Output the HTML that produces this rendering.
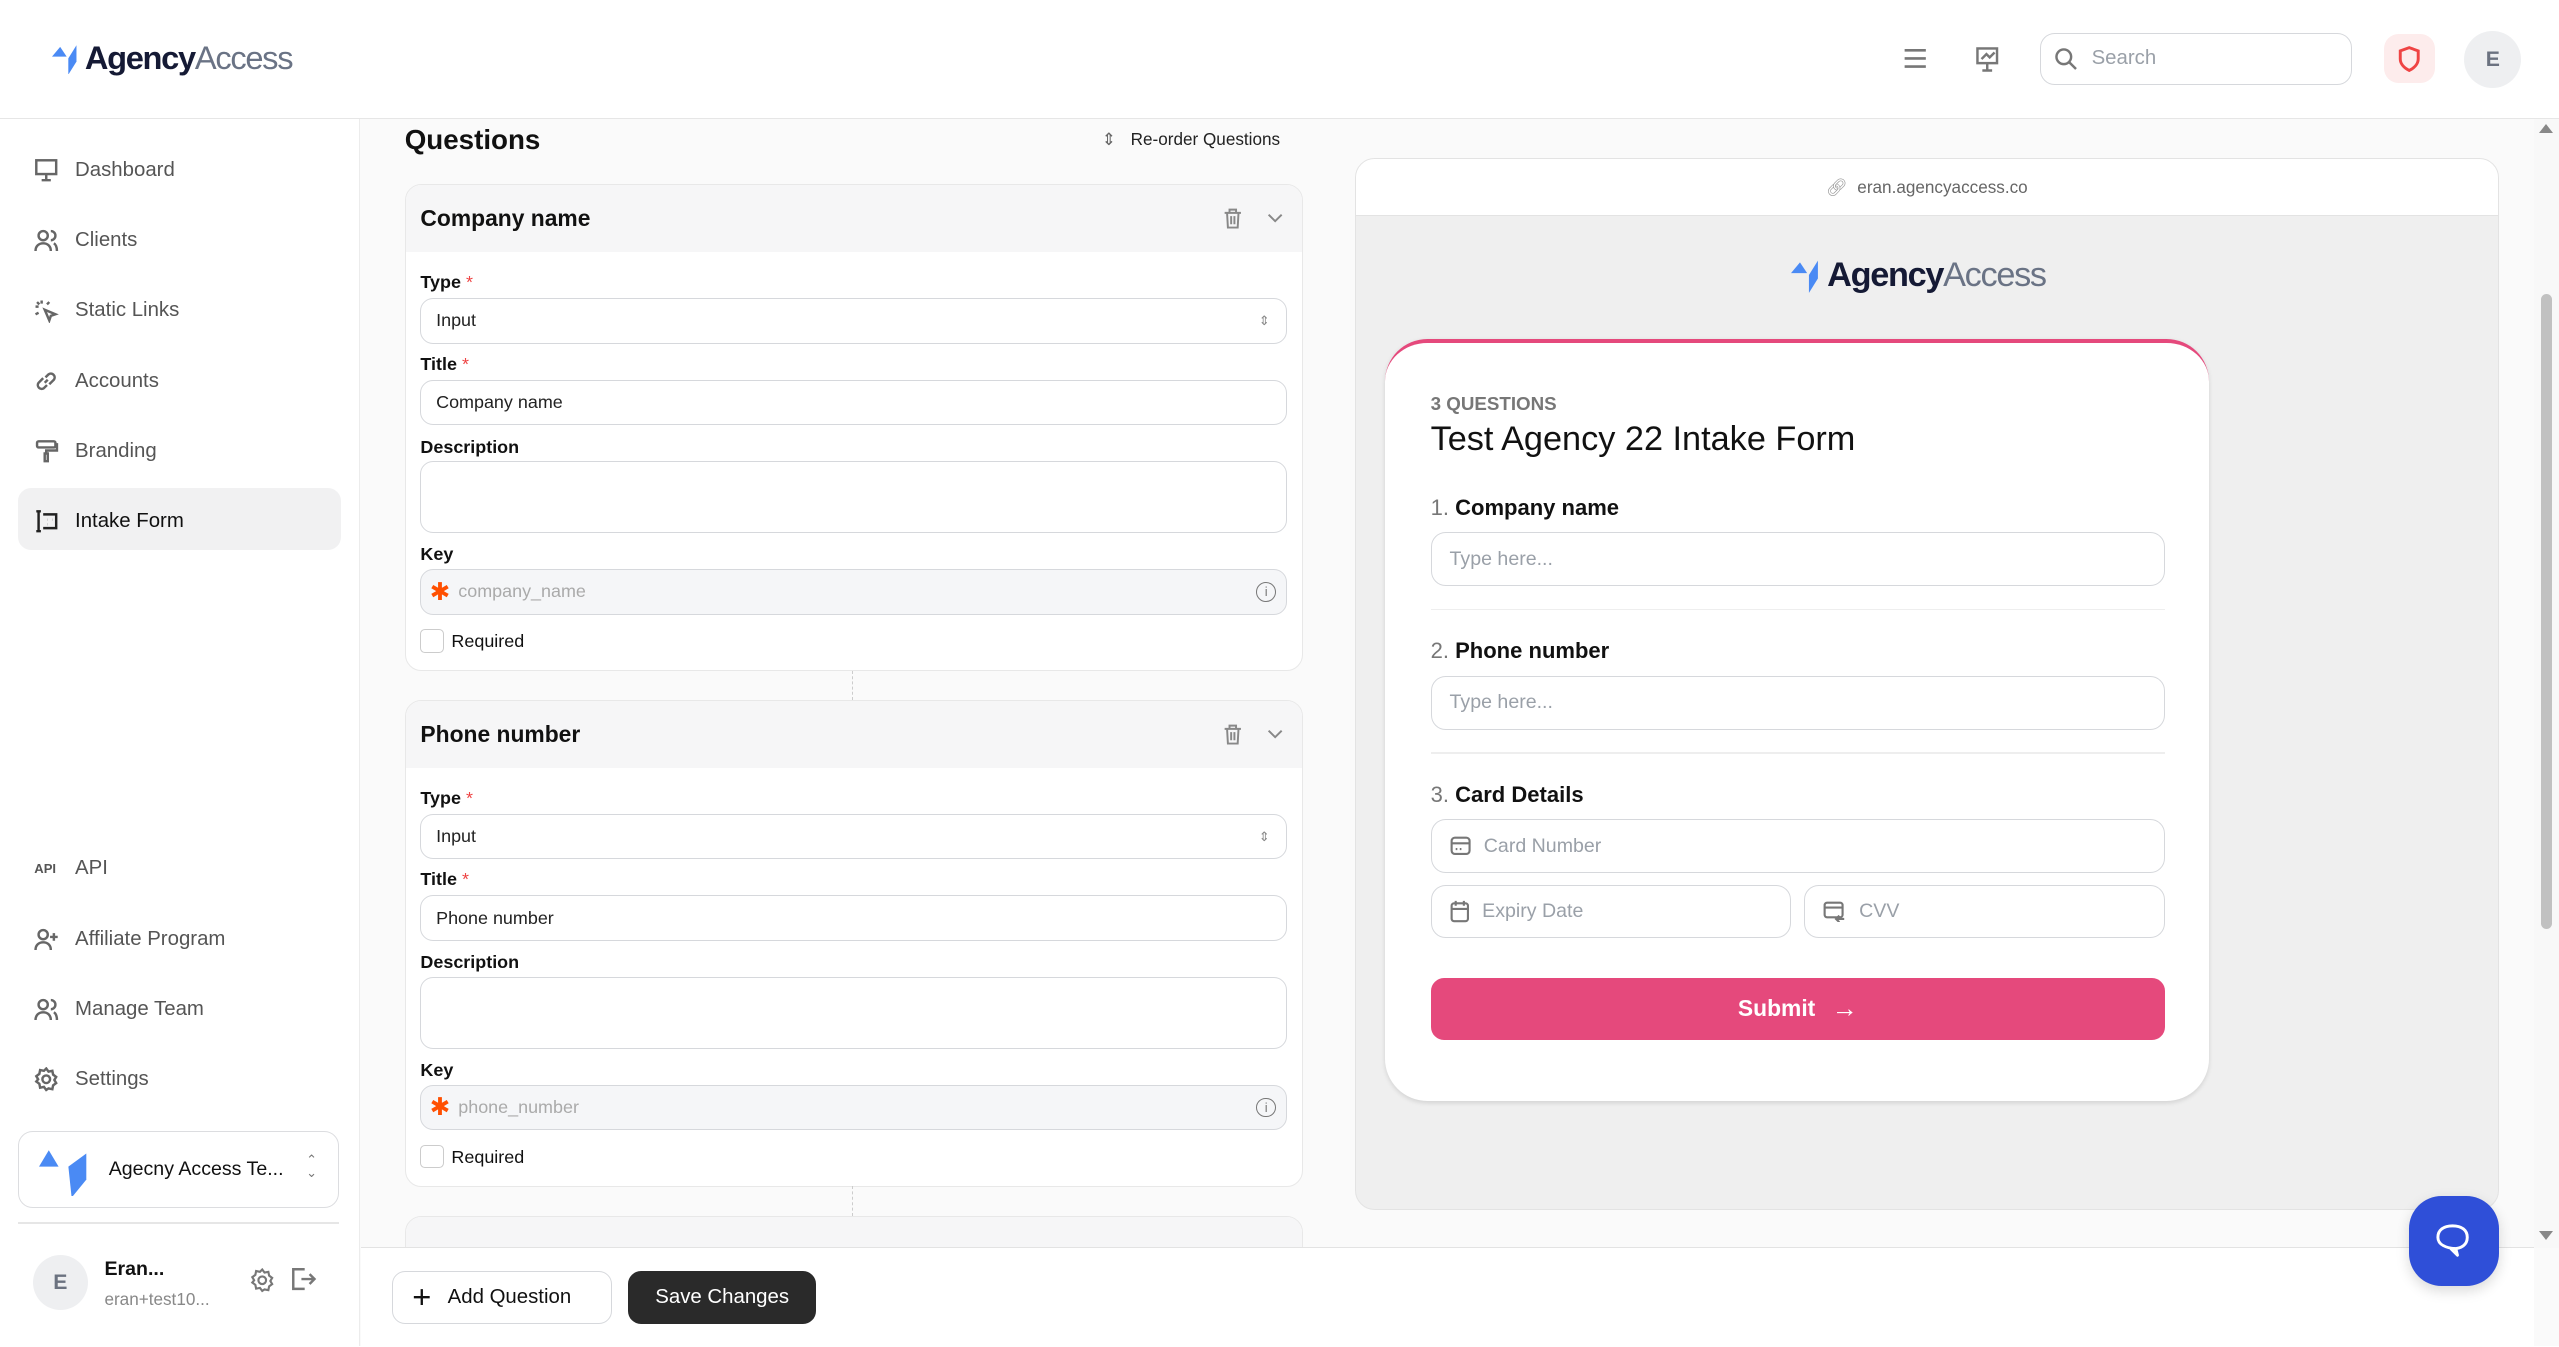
<!DOCTYPE html>
<html><head><meta charset="utf-8"><style>
html,body{margin:0;padding:0;overflow:hidden;background:#fff}
#r{zoom:1.632;width:1568px;height:825px;position:relative;font-family:"Liberation Sans","DejaVu Sans",sans-serif;color:#111;overflow:hidden;background:#fafafa}
.a{position:absolute}
.hdr{left:0;top:0;width:1568px;height:72px;background:#fff;border-bottom:1px solid #e6e6e6}
.side{left:0;top:73px;width:220px;height:752px;background:#fff;border-right:1px solid #ececec}
.nav{position:absolute;left:21px;font-size:12.5px;color:#555;display:flex;align-items:center;gap:10px}
.nav svg{width:15px;height:15px;fill:none;stroke:#666;stroke-width:1.6}
.card{position:absolute;left:248px;width:549px;background:#fff;border:1px solid #e8e8e8;border-radius:10px;overflow:hidden}
.ch{height:41px;background:#f6f6f7;display:flex;align-items:center;padding-left:9px;font-size:14px;font-weight:bold;color:#111}
.lbl{position:absolute;left:9px;font-size:11px;font-weight:bold;color:#111}
.lbl i{color:#e44;font-style:normal;font-weight:normal}
.inp{position:absolute;left:9px;width:531px;border:1px solid #d6d8dc;border-radius:8px;font-size:11px;color:#222;box-sizing:border-box;padding-left:9px;display:flex;align-items:center;background:#fff}
.pv{left:830px;top:97px;width:700px;height:643px;border:1px solid #e3e3e3;border-radius:12px;background:#efefef;overflow:hidden}
.fi{position:absolute;border:1px solid #d6d8dc;border-radius:9px;height:33px;box-sizing:border-box;background:#fff;display:flex;align-items:center;padding-left:11px;font-size:12px;color:#9aa0a8;gap:8px}
.q{position:absolute;left:28px;font-size:13.5px;font-weight:bold;color:#111}
.q span{color:#777;font-weight:normal}
</style></head><body><div id="r">
<div class="a hdr">
 <div class="a" style="left:32px;top:24px;display:flex;align-items:center">
  <svg width="20" height="20" viewBox="0 0 20 20"><path d="M0 9 L5 3 L9 9Z" fill="#4a8af4"/><path d="M10 10 L15 2 L15 12 L10 20Z" fill="#4a8af4"/></svg>
  <span style="font-size:20px;letter-spacing:-0.8px;color:#151a35;font-weight:bold">Agency</span><span style="font-size:20px;letter-spacing:-0.8px;color:#6a7385">Access</span>
 </div>
 <svg class="a" style="left:1166px;top:29px" width="15" height="14" viewBox="0 0 15 14" stroke="#777" stroke-width="1.6"><path d="M1 2h13M1 7h13M1 12h13"/></svg>
 <svg class="a" style="left:1210px;top:28px" width="15" height="16" viewBox="0 0 15 16" fill="none" stroke="#777" stroke-width="1.5"><rect x="1.5" y="1.5" width="12" height="9"/><path d="M7.5 10.5v4M4.5 15h6M4 8l3-3 2 2 3-3"/></svg>
 <div class="a" style="left:1250px;top:20px;width:191px;height:32px;border:1px solid #d6d8dc;border-radius:9px;box-sizing:border-box;display:flex;align-items:center;padding-left:8px;gap:8px;color:#9aa0a8;font-size:12.5px">
  <svg width="15" height="15" viewBox="0 0 15 15" fill="none" stroke="#777" stroke-width="1.5"><circle cx="6" cy="6" r="4.5"/><path d="M9.5 9.5l4 4"/></svg>Search</div>
 <div class="a" style="left:1461px;top:21px;width:31px;height:30px;background:#fdecec;border-radius:9px"><svg class="a" style="left:8px;top:7px" width="15" height="16" viewBox="0 0 15 16" fill="none" stroke="#ef4444" stroke-width="1.8"><path d="M2 3l5.5-2 5.5 2v5c0 3-2.5 5.5-5.5 7C4.5 13.5 2 11 2 8Z"/></svg></div>
 <div class="a" style="left:1510px;top:19px;width:35px;height:35px;border-radius:50%;background:#eeeff1;color:#6b7280;font-weight:bold;font-size:13px;display:flex;align-items:center;justify-content:center">E</div>
</div>
<div class="a side">
 <div class="a" style="left:11px;top:226px;width:198px;height:38px;background:#f1f1f2;border-radius:8px"></div>
 <div class="nav" style="top:24px"><svg viewBox="0 0 16 16"><rect x="1.5" y="1.5" width="13" height="9"/><path d="M8 10.5v4M5 14.5h6"/></svg>Dashboard</div>
 <div class="nav" style="top:67px"><svg viewBox="0 0 16 16"><circle cx="6" cy="5" r="3"/><path d="M1 15c0-3 2-5 5-5s5 2 5 5M11 2a3 3 0 010 6M13 10c1.5 1 2 3 2 5"/></svg>Clients</div>
 <div class="nav" style="top:110px"><svg viewBox="0 0 16 16"><path d="M7 7l7 3-3 1-1 3ZM5 1v2M1 5h2M2 2l1.5 1.5M1 10l2-1M10 2l-1.5 1.5"/></svg>Static Links</div>
 <div class="nav" style="top:153px"><svg viewBox="0 0 16 16"><path d="M7 9l2-2M6 6l-3 3a2.5 2.5 0 003.5 3.5l2-2M10 10l3-3a2.5 2.5 0 00-3.5-3.5l-2 2"/></svg>Accounts</div>
 <div class="nav" style="top:196px"><svg viewBox="0 0 16 16"><rect x="2" y="1.5" width="12" height="4" rx="1"/><path d="M14 3.5h1v4H8v2M7 9.5h2v5H7z"/></svg>Branding</div>
 <div class="nav" style="top:239px;color:#111"><svg viewBox="0 0 16 16" style="stroke:#222"><path d="M3 1.5v13M1.5 1.5h3M1.5 14.5h3M6 3.5h8.5v9H6"/><path d="M9 7h.1M12 7h.1M9 10h.1"/></svg>Intake Form</div>
 <div class="nav" style="top:452px"><span style="font-size:8px;font-weight:bold;color:#555;width:15px">API</span>API</div>
 <div class="nav" style="top:495px"><svg viewBox="0 0 16 16"><circle cx="6" cy="5" r="3"/><path d="M1 15c0-3 2-5 5-5s5 2 5 5M13 4v5M10.5 6.5h5"/></svg>Affiliate Program</div>
 <div class="nav" style="top:538px"><svg viewBox="0 0 16 16"><circle cx="6" cy="5" r="3"/><path d="M1 15c0-3 2-5 5-5s5 2 5 5M11 2a3 3 0 010 6M13 10c1.5 1 2 3 2 5"/></svg>Manage Team</div>
 <div class="nav" style="top:581px"><svg viewBox="0 0 16 16"><circle cx="8" cy="8" r="2.5"/><path d="M8 1l1.5 2 2.5-.5.5 2.5 2 1.5-1.2 2 1.2 2-2 1.5-.5 2.5-2.5-.5L8 15l-1.5-2-2.5.5-.5-2.5-2-1.5L2.7 8 1.5 6l2-1.5.5-2.5 2.5.5Z"/></svg>Settings</div>
 <div class="a" style="left:11px;top:620px;width:197px;height:47px;border:1px solid #dcdde0;border-radius:9px;box-sizing:border-box">
  <svg class="a" style="left:12px;top:9px" width="30" height="30" viewBox="0 0 30 30"><path d="M0 12L6 2 12 12Z" fill="#4a8af4"/><path d="M18 12L29 4 29 20 20 31Z" fill="#4a8af4"/></svg>
  <div class="a" style="left:55px;top:16px;font-size:12px;color:#111">Agecny Access Te...</div>
  <div class="a" style="left:176px;top:13px;font-size:8px;color:#777;line-height:8px">&#8963;<br>&#8964;</div>
 </div>
 <div class="a" style="left:11px;top:676px;width:197px;height:1px;background:#e6e6e6"></div>
 <div class="a" style="left:20px;top:696px;width:34px;height:34px;border-radius:50%;background:#eeeff1;color:#6b7280;font-weight:bold;font-size:13px;display:flex;align-items:center;justify-content:center">E</div>
 <div class="a" style="left:64px;top:698px;font-size:12px;font-weight:bold">Eran...</div>
 <div class="a" style="left:64px;top:717px;font-size:10.5px;color:#888">eran+test10...</div>
 <svg class="a" style="left:153px;top:704px" width="15" height="15" viewBox="0 0 16 16" fill="none" stroke="#777" stroke-width="1.4"><circle cx="8" cy="8" r="2.5"/><path d="M8 1l1.5 2 2.5-.5.5 2.5 2 1.5-1.2 2 1.2 2-2 1.5-.5 2.5-2.5-.5L8 15l-1.5-2-2.5.5-.5-2.5-2-1.5L2.7 8 1.5 6l2-1.5.5-2.5 2.5.5Z"/></svg>
 <svg class="a" style="left:178px;top:703px" width="16" height="16" viewBox="0 0 16 16" fill="none" stroke="#777" stroke-width="1.5"><path d="M9 2H2v12h7M7 8h8M12 5l3 3-3 3"/></svg>
</div>

<div class="a" style="left:248px;top:76px;font-size:17px;font-weight:bold">Questions</div>
<div class="a" style="left:675px;top:79px;font-size:10.5px;color:#222;display:flex;gap:9px;align-items:center"><span style="color:#666">&#8661;</span>Re-order Questions</div>

<div class="card" style="top:113px;height:297px">
 <div class="ch">Company name</div>
 <svg class="a" style="left:501px;top:14px" width="12" height="13" viewBox="0 0 12 13" fill="none" stroke="#888" stroke-width="1.2"><path d="M1 3h10M4 3V1h4v2M2.5 3l.5 9h6l.5-9M5 5v5M7 5v5"/></svg>
 <svg class="a" style="left:528px;top:17px" width="10" height="6" viewBox="0 0 10 6" fill="none" stroke="#888" stroke-width="1.2"><path d="M1 1l4 4 4-4"/></svg>
 <div class="lbl" style="top:53px">Type <i>*</i></div>
 <div class="inp" style="top:69px;height:28px">Input<span style="position:absolute;right:10px;color:#888;font-size:8px">&#8661;</span></div>
 <div class="lbl" style="top:103px">Title <i>*</i></div>
 <div class="inp" style="top:119px;height:28px">Company name</div>
 <div class="lbl" style="top:154px">Description</div>
 <div class="inp" style="top:169px;height:44px"></div>
 <div class="lbl" style="top:220px">Key</div>
 <div class="inp" style="top:235px;height:28px;background:#f5f6f8;color:#aaa;padding-left:5px"><span style="color:#ff4f00;font-size:15px;margin-right:5px;font-weight:bold">&#10033;</span>company_name<span style="position:absolute;right:6px;width:11px;height:11px;border:1px solid #777;border-radius:50%;font-size:8px;color:#777;text-align:center;line-height:11px">i</span></div>
 <div class="a" style="left:9px;top:272px;width:13px;height:13px;border:1px solid #ccc;border-radius:3px"></div>
 <div class="a" style="left:28px;top:273px;font-size:11px">Required</div>
</div>
<div class="a" style="left:522px;top:411px;height:18px;border-left:1px dashed #ccc"></div>
<div class="card" style="top:429px;height:297px">
 <div class="ch">Phone number</div>
 <svg class="a" style="left:501px;top:14px" width="12" height="13" viewBox="0 0 12 13" fill="none" stroke="#888" stroke-width="1.2"><path d="M1 3h10M4 3V1h4v2M2.5 3l.5 9h6l.5-9M5 5v5M7 5v5"/></svg>
 <svg class="a" style="left:528px;top:17px" width="10" height="6" viewBox="0 0 10 6" fill="none" stroke="#888" stroke-width="1.2"><path d="M1 1l4 4 4-4"/></svg>
 <div class="lbl" style="top:53px">Type <i>*</i></div>
 <div class="inp" style="top:69px;height:28px">Input<span style="position:absolute;right:10px;color:#888;font-size:8px">&#8661;</span></div>
 <div class="lbl" style="top:103px">Title <i>*</i></div>
 <div class="inp" style="top:119px;height:28px">Phone number</div>
 <div class="lbl" style="top:154px">Description</div>
 <div class="inp" style="top:169px;height:44px"></div>
 <div class="lbl" style="top:220px">Key</div>
 <div class="inp" style="top:235px;height:28px;background:#f5f6f8;color:#aaa;padding-left:5px"><span style="color:#ff4f00;font-size:15px;margin-right:5px;font-weight:bold">&#10033;</span>phone_number<span style="position:absolute;right:6px;width:11px;height:11px;border:1px solid #777;border-radius:50%;font-size:8px;color:#777;text-align:center;line-height:11px">i</span></div>
 <div class="a" style="left:9px;top:272px;width:13px;height:13px;border:1px solid #ccc;border-radius:3px"></div>
 <div class="a" style="left:28px;top:273px;font-size:11px">Required</div>
</div>
<div class="a" style="left:522px;top:727px;height:18px;border-left:1px dashed #ccc"></div>
<div class="card" style="top:745px;height:60px"><div class="ch" style="padding-top:10px;box-sizing:border-box">Card Details</div></div>

<div class="a pv">
 <div class="a" style="left:0;top:0;width:700px;height:34px;background:#fff;border-bottom:1px solid #e3e3e3;font-size:10.5px;color:#666;display:flex;align-items:center;justify-content:center;gap:6px"><span style="color:#999">&#128279;&#xFE0E;</span>eran.agencyaccess.co</div>
 <div class="a" style="left:267px;top:59px;display:flex;align-items:center">
  <svg width="22" height="22" viewBox="0 0 20 20"><path d="M0 9 L5 3 L9 9Z" fill="#4a8af4"/><path d="M10 10 L15 2 L15 12 L10 20Z" fill="#4a8af4"/></svg>
  <span style="font-size:21px;letter-spacing:-0.8px;color:#151a35;font-weight:bold">Agency</span><span style="font-size:21px;letter-spacing:-0.8px;color:#6a7385">Access</span>
 </div>
 <div class="a" style="left:18px;top:110px;width:505px;height:467px;background:#fff;border-radius:26px;border-top:3px solid #e5497c;box-sizing:border-box;box-shadow:0 1px 3px rgba(0,0,0,.12)">
  <div class="a" style="left:28px;top:31px;font-size:11.5px;font-weight:bold;color:#777">3 QUESTIONS</div>
  <div class="a" style="left:28px;top:47px;font-size:21px;color:#111">Test Agency 22 Intake Form</div>
  <div class="q" style="top:93px"><span>1.</span> Company name</div>
  <div class="fi" style="left:28px;top:116px;width:450px">Type here...</div>
  <div class="a" style="left:28px;top:163px;width:450px;height:1px;background:#eee"></div>
  <div class="q" style="top:181px"><span>2.</span> Phone number</div>
  <div class="fi" style="left:28px;top:204px;width:450px">Type here...</div>
  <div class="a" style="left:28px;top:251px;width:450px;height:1px;background:#eee"></div>
  <div class="q" style="top:269px"><span>3.</span> Card Details</div>
  <div class="fi" style="left:28px;top:292px;width:450px"><svg width="13" height="12" viewBox="0 0 13 12" fill="none" stroke="#777" stroke-width="1.3"><rect x="1" y="1" width="11" height="10" rx="2"/><path d="M1 4.5h11M3.5 8h1M6 8h1"/></svg>Card Number</div>
  <div class="fi" style="left:28px;top:332px;width:221px"><svg width="12" height="14" viewBox="0 0 12 14" fill="none" stroke="#777" stroke-width="1.3"><rect x="1" y="2" width="10" height="11" rx="1.5"/><path d="M1 5.5h10M3.5 0.5v3M8.5 0.5v3"/></svg>Expiry Date</div>
  <div class="fi" style="left:257px;top:332px;width:221px"><svg width="14" height="13" viewBox="0 0 14 13" fill="none" stroke="#777" stroke-width="1.3"><rect x="1" y="1" width="11" height="9" rx="1.5"/><path d="M1 4h11M10 9l-2 2 2 2M8 11h5"/></svg>CVV</div>
  <div class="a" style="left:28px;top:389px;width:450px;height:38px;background:#e5497c;border-radius:8px;color:#fff;font-size:14px;font-weight:bold;display:flex;align-items:center;justify-content:center;gap:10px">Submit <span style="font-weight:normal;font-size:16px">&#8594;</span></div>
 </div>
</div>

<div class="a" style="left:221px;top:764px;width:1332px;height:61px;background:#fff;border-top:1px solid #e3e3e3"></div>
<div class="a" style="left:240px;top:779px;width:135px;height:32px;border:1px solid #d6d8dc;border-radius:8px;box-sizing:border-box;display:flex;align-items:center;padding-left:12px;gap:10px;font-size:12.5px;color:#111"><span style="font-size:20px;font-weight:300;line-height:1">+</span>Add Question</div>
<div class="a" style="left:385px;top:779px;width:115px;height:32px;background:#2a2a2a;border-radius:8px;color:#fff;font-size:12.5px;display:flex;align-items:center;justify-content:center">Save Changes</div>

<div class="a" style="left:1553px;top:73px;width:15px;height:692px;background:#f8f8f8"></div>
<div class="a" style="left:1556px;top:76px;width:0;height:0;border-left:4.5px solid transparent;border-right:4.5px solid transparent;border-bottom:6px solid #888"></div>
<div class="a" style="left:1557px;top:180px;width:7px;height:389px;background:#c1c1c1;border-radius:4px"></div>
<div class="a" style="left:1556px;top:754px;width:0;height:0;border-left:4.5px solid transparent;border-right:4.5px solid transparent;border-top:6px solid #888"></div>

<div class="a" style="left:1476px;top:733px;width:55px;height:55px;background:#2f4fd8;border-radius:20px;box-shadow:0 3px 8px rgba(0,0,0,.15)">
 <svg class="a" style="left:15px;top:15px" width="25" height="25" viewBox="0 0 25 25" fill="none" stroke="#fff" stroke-width="1.8"><path d="M12 3c5.5 0 9 2.5 9 7s-3.5 7-9 7l-1 0 4 4-1-4c-6-.5-11-2.5-11-7s3.5-7 9-7Z" stroke-linejoin="round"/></svg>
</div>
</div></body></html>
